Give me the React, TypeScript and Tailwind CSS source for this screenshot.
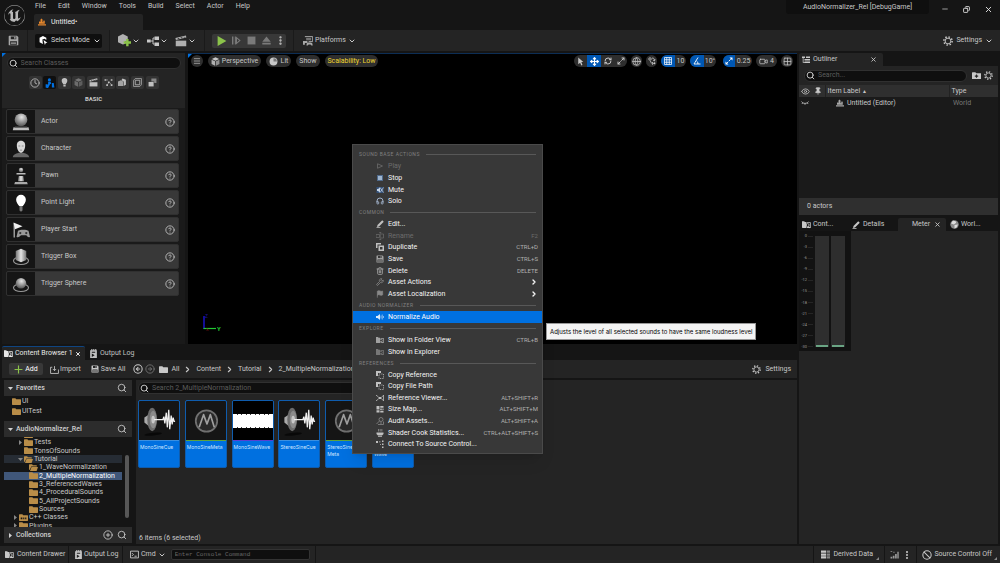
import React from "react";
import {
  ChevronDown, ChevronRight, CircleHelp, Clock, EllipsisVertical, Eye, Flag, Globe, Headphones,
  Grid2x2, Menu, Minus, Move, Pin, CirclePlus, RefreshCw, Search, Wrench, X,
  Copy, CircleArrowLeft, CircleArrowRight, Ban, Trash2, Video, Maximize2,
} from "lucide-react";
import { SiUnrealengine } from "react-icons/si";

type SvgProps = { className?: string; children?: React.ReactNode; box?: string };

function Svg({ className = "size-[9px]", children, box = "0 0 16 16" }: SvgProps) {
  return (
    <svg viewBox={box} className={`shrink-0 ${className}`} fill="currentColor" aria-hidden="true">
      {children}
    </svg>
  );
}

const GearIcon = ({ className = "size-[10px]" }: SvgProps) => (
  <Svg className={className}>
    <circle cx="8" cy="8" r="4.600" fill="none" stroke="currentColor" strokeWidth="1.500" />
    <circle cx="8" cy="8" r="6.600" fill="none" stroke="currentColor" strokeWidth="2.400" strokeDasharray="2.300 2.880" />
  </Svg>
);

const SaveIcon = ({ className = "size-[9px]" }: SvgProps) => (
  <Svg className={className}>
    <path fillRule="evenodd" d="M1 2a1 1 0 0 1 1-1h11l2 2v11a1 1 0 0 1-1 1H2a1 1 0 0 1-1-1zM4 2v4h8V2zM3 9v5h10V9z" />
    <path d="M9 2.500h2v3H9zM4 10h8v1H4zM4 12h8v1H4z" />
  </Svg>
);

const LevelIcon = ({ className = "size-[9px]" }: SvgProps) => (
  <Svg className={className}>
    <path d="M0 12.500h16V15H0z" />
    <path d="M2 11.500V8l1.500-1.500L5 8V3l2-2 2 2v5l1.500 1V6l1.500-1.500L13.500 6v5.500z" />
  </Svg>
);

const BrowserIcon = ({ className = "size-[9px]" }: SvgProps) => (
  <Svg className={className}>
    <path d="M0 2h4l1 1.500h3V14H1a1 1 0 0 1-1-1z" />
    <path d="M9 4h6.500v10H9v-1.500h5v-7H9z" />
    <circle cx="10" cy="9" r="2.600" fill="none" stroke="currentColor" strokeWidth="1.400" />
    <path d="M11.500 10.500l3 3-1 1-3-3z" />
  </Svg>
);

const LogIcon = ({ className = "size-[9px]" }: SvgProps) => (
  <Svg className={className}>
    <path fillRule="evenodd" d="M2 2h2V0h2v2h1.500V0h2v2H11V0h2v2h1v14H2zM5 5v1.500h6V5zM5 8v6l5-3z" />
  </Svg>
);

const FolderIcon = ({ className = "size-[9px]" }: SvgProps) => (
  <Svg className={className}>
    <path d="M0 3a1 1 0 0 1 1-1h5l1.500 2H15a1 1 0 0 1 1 1v8a1 1 0 0 1-1 1H1a1 1 0 0 1-1-1z" />
  </Svg>
);

const FolderOpenIcon = ({ className = "size-[9px]" }: SvgProps) => (
  <Svg className={className}>
    <path d="M0 3a1 1 0 0 1 1-1h4.500L7 4h6a1 1 0 0 1 1 1v1H4L1.500 12H0z" />
    <path d="M4.500 7H16l-2.500 7H1.800z" />
  </Svg>
);

const CodeFolderIcon = ({ className = "size-[9px]" }: SvgProps) => (
  <Svg className={className}>
    <path fillRule="evenodd" d="M0 3a1 1 0 0 1 1-1h5l1.500 2H15a1 1 0 0 1 1 1v8a1 1 0 0 1-1 1H1a1 1 0 0 1-1-1zM3 8v3h3V8zM7.500 8v3h2V8zM11 8v3h2V8z" />
  </Svg>
);

const CubeIcon = ({ className = "size-[9px]" }: SvgProps) => (
  <Svg className={className}>
    <path d="M8 0.500l6.500 3L8 6.500l-6.500-3z" />
    <path d="M1 4.700l6.300 3v7.800L1 12.300z" opacity=".85" />
    <path d="M15 4.700l-6.300 3v7.800L15 12.300z" opacity=".65" />
  </Svg>
);

const NodesIcon = ({ className = "size-[9px]" }: SvgProps) => (
  <Svg className={className}>
    <path d="M0 6h5v4H0zM10 2h6v4.500h-6zM10 10h6v4.500h-6z" />
    <path d="M5 8h3M10 4H8v8h2" fill="none" stroke="currentColor" strokeWidth="1.300" />
  </Svg>
);

const DotsIcon = ({ className = "size-[9px]" }: SvgProps) => (
  <Svg className={className}>
    <path d="M1 2h3v3H1zM12 2h3v3h-3zM12 11h3v3h-3zM4 11h3v3H4zM7 6h3v3H7z" />
    <path d="M4 3.500h3M10 8l3 4M8 9l-2 3" stroke="currentColor" strokeWidth="1" />
  </Svg>
);

const SurfaceIcon = ({ className = "size-[9px]" }: SvgProps) => (
  <Svg className={className}>
    <circle cx="4" cy="4" r="2.500" fill="none" stroke="currentColor" strokeWidth="1.600" />
    <path d="M8 2c4 0 5 2 5 5M14 4l-1 4-3-2M5 8c0 3 2 5 5 5M8 10l3 3-3 2.500" fill="none" stroke="currentColor" strokeWidth="1.600" />
    <circle cx="13" cy="12.500" r="1.800" />
  </Svg>
);

const ClapperIcon = ({ className = "size-[9px]" }: SvgProps) => (
  <Svg className={className}>
    <path d="M1 7.500h14V15H1z" />
    <path fillRule="evenodd" d="M0.500 4L14.500 0.500l.7 2.800L1.200 6.700zM3 4.500l2 .8 1.500-.4-2-.8zM7 3.500l2 .8 1.500-.4-2-.8zM11 2.500l2 .8 1-.3-2-.8z" />
  </Svg>
);

const PencilIcon = ({ className = "size-[8px]" }: SvgProps) => (
  <Svg className={className}>
    <path d="M3 10L12.500 0.500l3 3L6 13l-4 1zM1 14.500h8V16H1z" />
  </Svg>
);

const StackIcon = ({ className = "size-[8px]" }: SvgProps) => (
  <Svg className={className}>
    <path d="M0 0h10v3H3v7H0z" />
    <path fillRule="evenodd" d="M5 5h11v11H5zM8 8v5h5V8z" />
  </Svg>
);

const CopyRefIcon = ({ className = "size-[8px]" }: SvgProps) => (
  <Svg className={className}>
    <path d="M0 0h10v4H4v6H0z" />
    <path d="M6 6h9v9H6z" fill="none" stroke="currentColor" strokeWidth="1.500" strokeDasharray="2.500 2" />
  </Svg>
);

const PlayIcon = ({ className = "size-[8px]" }: SvgProps) => (
  <Svg className={className}>
    <path d="M3 3.500L13 8 3 12.500z" fill="none" stroke="currentColor" strokeWidth="1.600" />
  </Svg>
);

const StopIcon = ({ className = "size-[8px]" }: SvgProps) => (
  <Svg className={className}>
    <path d="M2 2h12v12H2z" fill="#4f6a8c" />
    <path d="M4 4h8v8H4z" fill="#9fb6cf" />
  </Svg>
);

const MuteIcon = ({ className = "size-[8px]" }: SvgProps) => (
  <Svg className={className}>
    <path d="M1 2h14v12H1z" fill="#35527a" />
    <path d="M2 6h2l4-3v10l-4-3H2z" fill="#c5d4e6" />
    <path d="M8 3l7 10M15 3L8 13" stroke="#c5d4e6" strokeWidth="1.500" />
  </Svg>
);

const SpeakerIcon = ({ className = "size-[8px]" }: SvgProps) => (
  <Svg className={className}>
    <path d="M0 6h3l5-4v12l-5-4H0z" opacity=".85" />
    <path d="M10 5v6M12.500 3v10M15 6v4" stroke="currentColor" strokeWidth="1.400" opacity=".7" />
  </Svg>
);

const RenameIcon = ({ className = "size-[8px]" }: SvgProps) => (
  <Svg className={className}>
    <path d="M0 5h7v6H0zM10 4h5v8h-5M8.500 1v14M6.500 1h4M6.500 15h4" fill="none" stroke="currentColor" strokeWidth="1.400" />
  </Svg>
);

const RefViewIcon = ({ className = "size-[8px]" }: SvgProps) => (
  <Svg className={className}>
    <path d="M5.500 6h5v4h-5z" />
    <path d="M0 3h2l3 4M0 13h2l3-4M16 3h-2l-3 4M16 13h-2l-3-4M15 3v10" fill="none" stroke="currentColor" strokeWidth="1.500" />
  </Svg>
);

const SizeMapIcon = ({ className = "size-[8px]" }: SvgProps) => (
  <Svg className={className}>
    <path d="M1 2h6v7H1zM1 10.500h6V15H1zM8.500 2H15v3.500H8.500zM8.500 7h3v3h-3zM13 7h2v3h-2zM8.500 11.500H15V15H8.500z" />
  </Svg>
);

const AuditIcon = ({ className = "size-[8px]" }: SvgProps) => (
  <Svg className={className}>
    <circle cx="10" cy="5" r="4" fill="none" stroke="currentColor" strokeWidth="1.600" />
    <path d="M7 8L1 14M4 15h11V9M10 10v4" fill="none" stroke="currentColor" strokeWidth="1.600" />
  </Svg>
);

const CookIcon = ({ className = "size-[8px]" }: SvgProps) => (
  <Svg className={className}>
    <path d="M4 0h1.500v5H4zM7.500 0H9v5H7.500zM11 0h1.500v5H11z" opacity=".7" />
    <path d="M1 7h14v3l-3 3H4l-3-3zM4 14h8v1.500H4z" />
  </Svg>
);

const BranchIcon = ({ className = "size-[8px]" }: SvgProps) => (
  <Svg className={className}>
    <path d="M0 2h4v4H0zM12 1h3v3h-3zM12 7h3v3h-3zM12 13h3v3h-3zM6 3h3v1.500H6zM8 8h2v1.500H8z" />
  </Svg>
);

const PlatformsIcon = ({ className = "size-[10px]" }: SvgProps) => (
  <Svg className={className}>
    <path d="M3 1h12.500v8H9" fill="none" stroke="currentColor" strokeWidth="1.600" />
    <path d="M0 8h7v3H3v3H0zM6 12c0-2 8-2 9 0l.5 3h-2L12 13.500H9L7.500 15H5.500z" />
    <path d="M5 3h8v4H5z" opacity=".6" />
  </Svg>
);

const OutlinerIcon = ({ className = "size-[8px]" }: SvgProps) => (
  <Svg className={className}>
    <path d="M0 1h6v3H0zM5 6h11v3H5zM5 11h11v3H5zM8 1h8v3H8zM1.500 4H3v8h2v1.500H1.500z" />
  </Svg>
);

const DerivedIcon = ({ className = "size-[9px]" }: SvgProps) => (
  <Svg className={className}>
    <path d="M0 1h9v4H0zM0 6h9v4H0zM0 11h9v4H0z" />
    <path d="M10 1h6v4h-6zM10 6h6v4h-6zM10 11h6v4h-6z" opacity=".6" />
  </Svg>
);

const Triangle = ({ open = false }: { open?: boolean }) => (
  <Svg className="size-[5px]" box="0 0 10 10">
    {open ? <path d="M0 2h10L5 8z" /> : <path d="M2 0l6 5-6 5z" />}
  </Svg>
);

function Thumb({ kind }: { kind: string }) {
  return (
    <svg viewBox="0 0 24 24" className="size-[18px]" aria-hidden="true">
      <defs>
        <radialGradient id={`ball-${kind}`} cx=".55" cy=".3" r=".7">
          <stop offset="0" stopColor="#e6e6e6" />
          <stop offset="1" stopColor="#555" />
        </radialGradient>
        <linearGradient id={`side-${kind}`}>
          <stop offset="0" stopColor="#777" />
          <stop offset=".5" stopColor="#e4e4e4" />
          <stop offset="1" stopColor="#777" />
        </linearGradient>
      </defs>
      {kind === "actor" && (
        <>
          <circle cx="12" cy="9" r="8.500" fill={`url(#ball-${kind})`} />
          <path d="M2 19h20l1 4H1z" fill="#bbb" />
          <path d="M4 18h16l1 1.500H3z" fill="#555" />
        </>
      )}
      {kind === "character" && (
        <>
          <path d="M1 23c1-5 6-5 8-6h6c2 1 7 1 8 6z" fill="#666" />
          <path d="M12 1c4 0 6 3 5.500 7.500C17 13 14.500 17 12 17s-5-4-5.500-8.500C6 4 8 1 12 1z" fill="#d8d8d8" />
          <path d="M8.500 8h2.500M13 8h2.500M10.500 13.500h3" stroke="#777" strokeWidth="1" />
        </>
      )}
      {kind === "pawn" && (
        <>
          <circle cx="12" cy="4" r="3" fill={`url(#ball-${kind})`} />
          <path d="M6 8h12v2H6z" fill="#bbb" />
          <path d="M9 12h6l1 7H8z" fill={`url(#side-${kind})`} />
          <path d="M4 20h16l1 3H3z" fill="#aaa" />
        </>
      )}
      {kind === "light" && (
        <>
          <path d="M12 1a6.500 6.500 0 0 1 6.500 6.500c0 3.500-2.500 6-4 8.500h-5c-1.500-2.500-4-5-4-8.500A6.500 6.500 0 0 1 12 1z" fill="#fff" />
          <path d="M10 16h4v6l-2 1.500-2-1.500z" fill="#777" />
        </>
      )}
      {kind === "start" && (
        <>
          <path d="M2 3h2v19H2z" fill="#999" />
          <path d="M2 2l12 5-10 4z" fill="#f0f0f0" />
          <path d="M8 13c2-2 12-2 14 0l2 8c-2 2-4-1-5-2h-7c-1 1-4 4-6 2z" fill="#999" />
          <circle cx="11" cy="16" r="1.500" fill="#333" />
          <circle cx="19" cy="16" r="1.500" fill="#333" />
        </>
      )}
      {kind === "box" && (
        <>
          <ellipse cx="12" cy="17" rx="10" ry="5" fill="none" stroke="#999" strokeWidth="1.500" />
          <path d="M5 4l7-3 7 3v12l-7 3-7-3z" fill={`url(#side-${kind})`} />
        </>
      )}
      {kind === "sphere" && (
        <>
          <ellipse cx="12" cy="17" rx="10" ry="5" fill="none" stroke="#999" strokeWidth="1.500" />
          <circle cx="12" cy="11" r="7" fill={`url(#ball-${kind})`} />
        </>
      )}
    </svg>
  );
}

const placeables = [
  ["Actor", "actor"], ["Character", "character"], ["Pawn", "pawn"], ["Point Light", "light"],
  ["Player Start", "start"], ["Trigger Box", "box"], ["Trigger Sphere", "sphere"],
];

function TitleBar() {
  return (
    <header className="flex h-[30px] shrink-0">
      <div className="flex w-[34px] items-center pl-1">
        <SiUnrealengine className="size-[21px] text-[#b8b8b8]" aria-label="Unreal" />
      </div>
      <div className="flex flex-col">
        <nav className="flex h-[13px] items-center gap-3 pl-px">
          {["File", "Edit", "Window", "Tools", "Build", "Select", "Actor", "Help"].map((m) => (
            <button key={m}>{m}</button>
          ))}
        </nav>
        <div className="mt-px flex h-4 w-[109px] items-center gap-[5px] rounded-t-[2px] bg-[#242424] pl-1 text-[#f0f0f0]">
          <LevelIcon className="size-[8px] text-[#e8882c]" />
          Untitled•
        </div>
      </div>
      <div className="ml-auto flex items-start">
        <div className="flex h-[14px] w-[143px] items-center justify-center rounded-b-[3px] bg-[#0f0f0f]">
          AudioNormalizer_Rel [DebugGame]
        </div>
        <div className="flex h-[18px] items-center gap-[14px] pr-[7px] pl-3 text-[#e0e0e0]">
          <button aria-label="Minimize"><Minus className="size-2" strokeWidth={2} /></button>
          <button aria-label="Restore"><Copy className="size-[7px] -scale-x-100" strokeWidth={3} /></button>
          <button aria-label="Close"><X className="size-[9px]" strokeWidth={2.5} /></button>
        </div>
      </div>
    </header>
  );
}

const Down = () => <ChevronDown className="size-[8px] shrink-0" strokeWidth={3} />;
const Rule = () => <div className="h-full w-px bg-[#1a1a1a]" />;

function Toolbar() {
  return (
    <div className="flex h-[21px] shrink-0 items-center bg-[#242424]">
      <button aria-label="Save" className="flex w-[27px] justify-center"><SaveIcon className="size-[11px] text-[#a8a8a8]" /></button>
      <Rule />
      <button className="mx-[7px] flex h-[14px] w-[67px] items-center gap-[3px] rounded-[2px] bg-[#0f0f0f] pl-1 text-[#d4d4d4]">
        <Svg className="size-[9px] text-white">
          <path d="M7 0l6 3v4l-3-2-4 1 1 8-6-3V3z" />
          <path d="M8 7l7 5-3 .5L10.500 16z" />
        </Svg>
        Select Mode <Down />
      </button>
      <Rule />
      <div className="flex w-[94px] items-center gap-[7px] pl-2">
        <button aria-label="Add to level" className="flex items-center gap-px">
          <Svg className="size-[13px] text-[#b0b0b0]">
            <path d="M6 0l6 3v6H9v3l-3 1-6-3V3z" />
            <path d="M10 9H7v3h3v3h3v-3h3V9h-3V6h-3z" fill="#8bc34a" />
          </Svg>
          <Down />
        </button>
        <button aria-label="Blueprints" className="flex items-center gap-px"><NodesIcon className="size-[12px]" /><Down /></button>
        <button aria-label="Cinematics" className="flex items-center gap-px"><ClapperIcon className="size-[12px] text-[#b0b0b0]" /><Down /></button>
      </div>
      <Rule />
      <div className="mx-[7px] flex h-[14px] w-[74px] items-center rounded-[2px] bg-[#383838] pl-[5px] text-[#7a7a7a]">
        <button aria-label="Play" className="w-[15px] text-[#8bc34a]"><Svg className="size-[10px]"><path d="M1 0l14 8-14 8z" /></Svg></button>
        <button aria-label="Step" className="w-[15px]"><Svg><path d="M0 1h2.500v14H0zM5 1h2v14H5z" /><path d="M8 3l6 5-6 5z" fill="none" stroke="currentColor" strokeWidth="1.800" /></Svg></button>
        <button aria-label="Stop" className="w-[15px]"><Svg><path d="M1 1h14v14H1z" /></Svg></button>
        <button aria-label="Eject" className="w-[13px]"><Svg><path d="M8 1l7.500 9H.5zM.5 12h15v3H.5z" /></Svg></button>
        <button aria-label="Play options" className="text-[#c8c8c8]"><EllipsisVertical className="size-[11px]" strokeWidth={3} /></button>
      </div>
      <Rule />
      <button className="flex items-center gap-[2px] pl-[9px]"><PlatformsIcon className="size-[10px] text-[#a8a8a8]" />Platforms <Down /></button>
      <button className="mr-[7px] ml-auto flex items-center gap-[3px]"><GearIcon className="size-[10px]" />Settings <Down /></button>
    </div>
  );
}

function SearchBox({ label, className = "" }: { label: string; className?: string }) {
  return (
    <label className={`flex h-[12px] items-center gap-[3px] rounded-full border border-[#303030] bg-[#0f0f0f] px-px ${className}`}>
      <Search className="size-[9px] shrink-0 text-[#d0d0d0]" strokeWidth={2.5} />
      <input type="text" aria-label={label} placeholder={label} className="w-full min-w-0 bg-transparent outline-none placeholder:text-[#5c5c5c]" />
    </label>
  );
}

function Corner() {
  return <Svg className="absolute top-0 left-0 size-1 text-[#0070e0]" box="0 0 4 4"><path d="M0 0h4L0 4z" /></Svg>;
}

function PlaceActors() {
  const cats = [
    ["Recent", <Clock className="size-[10px]" />],
    ["Basic", <Svg className="size-[10px]"><circle cx="7" cy="3" r="2.500" /><path d="M5 6h4l1 3-2 1-1 2-2 4H2l3-7zM1 10h3v5H1zM11 8h3l1 7h-4z" /></Svg>],
    ["Lights", <Svg><path d="M8 0a5 5 0 0 1 5 5c0 3-2 4-2.500 6h-5C5 9 3 8 3 5a5 5 0 0 1 5-5zM6 12h4v3H6z" /></Svg>],
    ["Shapes", <CubeIcon className="size-[9px] text-[#777]" />],
    ["Cinematic", <ClapperIcon />],
    ["Visual Effects", <DotsIcon />],
    ["Geometry", <Svg><path d="M0 6l5-2 4 2v8H0z" opacity=".8" /><path d="M8 1l6 2v9l-4 2V6L6 4z" /></Svg>],
    ["Volumes", <Svg><path d="M4 1h11v11l-3 3H1V4z" fill="none" stroke="currentColor" strokeWidth="1.200" /><path d="M4 4h8v8H4z" fill="none" stroke="currentColor" strokeWidth="1.400" /></Svg>],
    ["All Classes", <Svg><path d="M6 1h9v8h-4V6H6z" opacity=".6" /><path d="M1 7h9v8H1z" /></Svg>],
  ] as [string, React.ReactNode][];
  return (
    <section className="relative flex w-[183px] shrink-0 flex-col bg-[#1a1a1a]">
      <Corner />
      <div className="flex h-[55px] flex-col items-center bg-[#242424] pt-1">
        <SearchBox label="Search Classes" className="w-[174px]" />
        <div className="mt-[7px] flex w-[130px] justify-between">
          {cats.map(([name, icon], i) => (
            <button key={name} aria-label={name}
              className={i === 1
                ? "flex size-[13px] items-center justify-center rounded-[2px] bg-[#0f0f0f] text-[#0070e0]"
                : "flex size-[13px] items-center justify-center rounded-[2px] bg-[#333] text-[#c0c0c0]"}>
              {icon}
            </button>
          ))}
        </div>
        <h2 className="mt-[5px] text-[6px] font-bold">BASIC</h2>
      </div>
      <ul className="flex flex-col gap-[2px] pt-px pr-[6px] pl-1">
        {placeables.map(([name, kind]) => (
          <li key={kind} className="flex h-[25px] items-center overflow-hidden rounded-[2px] border border-[#303030] bg-[#383838]">
            <span className="flex h-full w-[28px] items-center justify-center bg-[#151515]"><Thumb kind={kind} /></span>
            <span className="flex-1 pl-[6px]">{name}</span>
            <button aria-label={`About ${name}`} className="pr-[3px]"><CircleHelp className="size-[10px]" /></button>
          </li>
        ))}
      </ul>
    </section>
  );
}

function Viewport() {
  const pill = "flex h-3 items-center justify-center rounded-full bg-[#2e2e2e]";
  const seg = "flex h-full w-[13px] items-center justify-center";
  const blue = "flex h-full w-[14px] items-center justify-center bg-[#0057b3] text-white";
  return (
    <section className="relative min-w-0 flex-1 border-t border-[#0d2e55] bg-black">
      <Corner />
      <div className="flex pt-px pr-1 pl-[3px]">
        <div className="flex gap-[5px]">
          <button aria-label="Viewport options" className={`${pill} w-3`}><Menu className="size-[8px]" /></button>
          <button className={`${pill} w-[53px] gap-[2px]`}><CubeIcon />Perspective</button>
          <button className={`${pill} w-[25px] gap-[3px]`}><Svg><circle cx="8" cy="8" r="7" /><path d="M8 8V2a6 6 0 0 1 6 6z" fill="#777" /></Svg>Lit</button>
          <button className={`${pill} w-[24px]`}>Show</button>
          <button className={`${pill} w-[53px] text-[#f0d631]`}>Scalability: Low</button>
        </div>
        <div className="ml-auto flex gap-1">
          <div className={`${pill} overflow-hidden`}>
            <button aria-label="Select" className={seg}><Svg className="size-[9px]"><path d="M4 1l9 8H9.500l2 5-2 1-2.200-5L4 13z" /></Svg></button>
            <button aria-label="Move" className={blue}><Move className="size-[9px]" strokeWidth={3} /></button>
            <button aria-label="Rotate" className={seg}><RefreshCw className="size-[8px]" strokeWidth={3} /></button>
            <button aria-label="Scale" className={seg}><Maximize2 className="size-[8px]" strokeWidth={3} /></button>
          </div>
          <button aria-label="World space" className={`${pill} w-[11px]`}><Globe className="size-[9px]" /></button>
          <button aria-label="Surface snapping" className={`${pill} w-[11px]`}><SurfaceIcon className="size-[8px]" /></button>
          <div className={`${pill} overflow-hidden`}>
            <button aria-label="Grid snap" className={blue}><Svg className="size-[8px]"><path d="M1 1h14v14H1zM1 5.500h14M1 10.500h14M5.500 1v14M10.500 1v14" fill="none" stroke="currentColor" strokeWidth="1.500" /></Svg></button>
            <button className="w-[11px]">10</button>
          </div>
          <div className={`${pill} mr-[3px] overflow-hidden`}>
            <button aria-label="Angle snap" className={blue}><Svg className="size-[8px]"><path d="M10 1L2 14h13M10 14a6 6 0 0 0-3-6" fill="none" stroke="currentColor" strokeWidth="1.800" /></Svg></button>
            <button className="w-[12px]">10°</button>
          </div>
          <div className={`${pill} overflow-hidden`}>
            <button aria-label="Scale snap" className="flex h-full w-[12px] items-center justify-center bg-[#0057b3] text-white"><Svg className="size-[8px]"><path d="M9 1h6v6zM7 15H1V9z" /><path d="M3 13L13 3" stroke="currentColor" strokeWidth="1.800" strokeDasharray="5 2" /></Svg></button>
            <button className="w-[17px]">0.25</button>
          </div>
          <button className={`${pill} w-[21px] gap-[2px]`}><Video className="size-[9px]" />4</button>
          <button aria-label="Layout" className={`${pill} w-3`}><Grid2x2 className="size-[9px]" /></button>
        </div>
      </div>
      <svg viewBox="0 0 24 20" className="absolute bottom-3 left-[13px] h-5 w-6" aria-hidden="true">
        <path d="M3 4v13" stroke="#1a12c8" strokeWidth="1.500" />
        <path d="M2.500 16.500H15" stroke="#22c832" strokeWidth="1.200" />
        <text x="4" y="6" fontSize="5" fill="#1a1290" fontFamily="Roboto">Z</text>
        <text x="16" y="19" fontSize="6" fill="#22c832" fontFamily="Roboto" fontWeight="700">Y</text>
        <text x="5" y="19" fontSize="4" fill="#8c1414" fontFamily="Roboto">X</text>
      </svg>
    </section>
  );
}

const tree = [
  { name: "", pad: "pl-[14px]", icon: "folder" },
  { name: "Tests", pad: "pl-[14px]", icon: "folder", arrow: "closed" },
  { name: "TonsOfSounds", pad: "pl-[14px]", icon: "folder" },
  { name: "Tutorial", pad: "pl-[14px]", icon: "open", arrow: "open", bg: "bg-[#262c34]" },
  { name: "1_WaveNormalization", pad: "pl-[19px]", icon: "open" },
  { name: "2_MultipleNormalization", pad: "pl-[19px]", icon: "folder", bg: "bg-[#40577a] text-white" },
  { name: "3_ReferencedWaves", pad: "pl-[19px]", icon: "folder" },
  { name: "4_ProceduralSounds", pad: "pl-[19px]", icon: "folder" },
  { name: "5_AllProjectSounds", pad: "pl-[19px]", icon: "folder" },
  { name: "Sources", pad: "pl-[19px]", icon: "folder" },
  { name: "C++ Classes", pad: "pl-[9px]", icon: "code", arrow: "closed" },
  { name: "Plugins", pad: "pl-[9px]", icon: "folder", arrow: "closed" },
];

function TreeIcon({ kind }: { kind: string }) {
  const c = "size-[9px] text-[#b98d48]";
  if (kind === "open") return <FolderOpenIcon className={c} />;
  if (kind === "code") return <CodeFolderIcon className={c} />;
  return <FolderIcon className={c} />;
}

function SectionHead({ title, open, children }: { title: string; open: boolean; children?: React.ReactNode }) {
  return (
    <div className="flex h-4 shrink-0 items-center gap-[3px] bg-[#2c2c2c] pr-[5px] pl-1 text-[#d0d0d0]">
      <Triangle open={open} />
      <h3 className="flex-1 font-medium">{title}</h3>
      {children}
      <button aria-label={`Search ${title}`}><Search className="size-[10px]" /></button>
    </div>
  );
}

function Sources() {
  return (
    <aside className="flex w-[128px] shrink-0 flex-col bg-[#151515] pb-px">
      <SectionHead title="Favorites" open />
      <ul className="h-[25px] pl-2">
        {["UI", "UITest"].map((n) => (
          <li key={n} className="flex h-[10px] items-center gap-px"><TreeIcon kind="folder" />{n}</li>
        ))}
      </ul>
      <SectionHead title="AudioNormalizer_Rel" open />
      <div className="relative min-h-0 flex-1 overflow-hidden">
        <ul className="-mt-[7px] grid h-[100px] w-[118px] auto-rows-fr">
          {tree.map((t, i) => (
            <li key={i} className={`flex min-h-0 items-center leading-[8px] ${t.pad} ${t.bg ?? ""}`}>
              <span className="w-[6px] text-[#888]">{t.arrow && <Triangle open={t.arrow === "open"} />}</span>
              <TreeIcon kind={t.icon} /><span className="pl-px">{t.name}</span>
            </li>
          ))}
        </ul>
        <div className="absolute top-[18px] right-[3px] h-[63px] w-1 rounded-full bg-[#575757]" />
      </div>
      <SectionHead title="Collections" open={false}>
        <button aria-label="Add collection" className="pr-px"><CirclePlus className="size-[10px]" /></button>
      </SectionHead>
    </aside>
  );
}

function AssetArt({ kind }: { kind: string }) {
  if (kind === "wave")
    return (
      <svg viewBox="0 0 40 40" className="size-full bg-black" preserveAspectRatio="none" aria-hidden="true">
        <path d="M0 14h40v13H0z" fill="#fff" />
        <path d="M0 14h40M0 27h40" stroke="#fff" strokeWidth="1.200" strokeDasharray="4 1 3 1" />
      </svg>
    );
  if (kind === "meta")
    return (
      <svg viewBox="0 0 40 40" className="size-full" aria-hidden="true">
        <circle cx="20.500" cy="20.500" r="11" fill="#282828" stroke="#707070" strokeWidth="1.800" />
        <path d="M13 27l4.500-13 3.500 9.500 3.500-9.500 4 13" fill="none" stroke="#a0a0a0" strokeWidth="1.700" strokeLinejoin="round" />
      </svg>
    );
  return (
    <svg viewBox="0 0 40 40" className="size-full" aria-hidden="true">
      <ellipse cx="14" cy="34" rx="9" ry="1.500" fill="#080808" transform="rotate(-6 14 34)" />
      <path d="M5 17l6-4v14l-6-5z" fill="#aaa" />
      <ellipse cx="13" cy="19" rx="5" ry="12" fill="#6c6c6c" />
      <ellipse cx="14" cy="19" rx="3.500" ry="9" fill="#8c8c8c" />
      <ellipse cx="14" cy="19" rx="1.800" ry="4" fill="#c8c8c8" />
      <path d="M15 19h9l1-3 1 7 1.500-11 1 15 1.500-18 1 20 1.500-14 1 9 1-7 1 4h1" fill="none" stroke="#f0f0f0" strokeWidth="1.300" />
    </svg>
  );
}

const assets = [
  { name: "MonoSineCue", kind: "cue", line: "bg-[#3a8fe0]" },
  { name: "MonoSineMeta", kind: "meta", line: "bg-[#5da43c]" },
  { name: "MonoSineWave", kind: "wave", line: "bg-[#5a3fd0]" },
  { name: "StereoSineCue", kind: "cue", line: "bg-[#3a8fe0]" },
  { name: "StereoSine Meta", kind: "meta", line: "bg-[#5da43c]" },
  { name: "StereoSine Wave", kind: "wave", line: "bg-[#5a3fd0]" },
];

function ContentBrowser() {
  return (
    <section className="flex h-[200px] shrink-0 flex-col">
      <div className="mt-[2px] flex h-[14px] text-[#c0c0c0]">
        <div className="flex w-[83px] items-center gap-[2px] rounded-t-[2px] border-t border-[#0f4582] bg-[#242424] pl-[2px] text-[#e8e8e8]">
          <BrowserIcon />Content Browser 1
          <button aria-label="Close tab"><X className="size-[6px]" strokeWidth={4} /></button>
        </div>
        <button className="flex items-center gap-[2px] pl-1"><LogIcon />Output Log</button>
      </div>
      <div className="flex h-[18px] items-center bg-[#242424] pl-[7px]">
        <button className="flex h-3 w-[34px] items-center justify-center gap-[2px] rounded-[2px] bg-[#383838] text-white">
          <Svg className="size-[9px] text-[#8bc34a]"><path d="M7 1h2v6h6v2H9v6H7V9H1V7h6z" /></Svg>Add
        </button>
        <button className="flex items-center gap-px pl-[7px]"><Svg><path d="M4 4H1v11h14V8M8 2v8M5 7l3 3 3-3" fill="none" stroke="currentColor" strokeWidth="1.500" /></Svg>Import</button>
        <button className="flex items-center gap-[2px] pl-[10px]"><SaveIcon className="size-[8px]" />Save All</button>
        <button aria-label="Back" className="pl-[7px]"><CircleArrowLeft className="size-[10px]" strokeWidth={2.5} /></button>
        <button aria-label="Forward" className="pl-[2px] text-[#777]"><CircleArrowRight className="size-[10px]" /></button>
        <nav className="flex items-center gap-[4px] pl-[4px]">
          <FolderIcon />
          {["All", "Content", "Tutorial", "2_MultipleNormalization"].map((c, i) => (
            <React.Fragment key={c}>
              {i > 0 && <ChevronRight className="size-[9px]" strokeWidth={3} />}
              <a href="#">{c}</a>
            </React.Fragment>
          ))}
        </nav>
        <button className="ml-auto flex items-center gap-1 pr-[6px]"><GearIcon className="size-[9px]" />Settings</button>
      </div>
      <div className="mt-[2px] flex min-h-0 flex-1 gap-1 pl-[2px]">
        <Sources />
        <div className="flex min-w-0 flex-1 flex-col bg-[#242424] px-[2px]">
          <SearchBox label="Search 2_MultipleNormalization" className="mt-[2px] w-[380px]" />
          <ul className="mt-[6px] flex w-[276px] justify-between">
            {assets.map((a) => (
              <li key={a.name} className="flex h-[68px] w-[42px] flex-col overflow-hidden rounded-[2px] border border-[#0f5cad] bg-[#0070e0]">
                <div className="h-[39px] bg-[#151515]"><AssetArt kind={a.kind} /></div>
                <div className={`h-px ${a.line}`} />
                <p className="pt-[3px] pl-px font-['Inter',sans-serif] text-[5px] leading-[7px] text-[#cfe6ff]">{a.name}</p>
              </li>
            ))}
          </ul>
          <p className="mt-auto pb-px pl-px">6 items (6 selected)</p>
        </div>
      </div>
    </section>
  );
}

function RightColumn() {
  const ticks = ["0", "-3", "-6", "-9", "-12", "-15", "-18", "-21", "-24", "-27", "-30"];
  return (
    <aside className="flex w-[199px] shrink-0 flex-col">
      <div className="flex h-[13px] w-[84px] items-center gap-[3px] rounded-t-[2px] bg-[#242424] pr-[6px] pl-[3px]">
        <OutlinerIcon /><span className="flex-1">Outliner</span>
        <button aria-label="Close tab"><X className="size-[7px]" strokeWidth={3} /></button>
      </div>
      <div className="flex h-[19px] items-center gap-[3px] bg-[#242424] pr-[5px] pl-[5px]">
        <SearchBox label="Search..." className="flex-1" />
        <button aria-label="New folder" className="pl-[2px]"><Svg><path fillRule="evenodd" d="M0 3a1 1 0 0 1 1-1h5l1.500 2H16v10H0zM7 6v2H5v2h2v2h2v-2h2V8H9V6z" /></Svg></button>
        <button aria-label="Outliner settings"><GearIcon className="size-[9px]" /></button>
      </div>
      <div className="h-[113px] flex-auto grow-0 bg-[#1a1a1a]">
        <table className="w-full table-fixed border-collapse text-left">
          <thead className="bg-[#2f2f2f]">
            <tr className="h-3">
              <th className="w-[13px] pl-[2px]"><Eye className="size-[9px]" aria-label="Visible" /></th>
              <th className="w-[13px] border-r border-[#222] pl-[2px]"><Pin className="size-[8px] fill-current" aria-label="Pinned" /></th>
              <th className="border-r border-[#222] pl-[2px] font-normal">Item Label <span className="text-[5px]">▲</span></th>
              <th className="w-[49px] pl-[2px] font-normal">Type</th>
            </tr>
          </thead>
          <tbody>
            <tr className="h-3">
              <td className="pl-[2px]"><Svg className="size-[8px]"><path d="M1 5c3 5 11 5 14 0M3 8l-1 2M8 9v2.500M13 8l1 2" fill="none" stroke="currentColor" strokeWidth="1.600" /></Svg></td>
              <td />
              <td className="pl-[11px]"><span className="flex items-center gap-[3px]"><LevelIcon className="size-[8px] text-[#a8a8a8]" />Untitled (Editor)</span></td>
              <td className="pl-1 text-[#777]">World</td>
            </tr>
          </tbody>
        </table>
      </div>
      <div className="flex h-[17px] items-center bg-[#2f2f2f] pl-[8px]">0 actors</div>
      <div className="mt-[3px] flex h-[13px]">
        <button className="flex w-[49px] items-center gap-[2px] pl-[3px]"><BrowserIcon />Cont...</button>
        <button className="flex w-[50px] items-center gap-[3px] pl-1"><PencilIcon />Details</button>
        <div className="flex w-[48px] items-center gap-[4px] rounded-t-[2px] bg-[#242424] pl-[14px]">
          Meter<button aria-label="Close tab"><X className="size-[7px]" strokeWidth={3} /></button>
        </div>
        <button className="flex items-center gap-[2px] pl-1"><Svg><circle cx="8" cy="8" r="7.500" fill="#8a8a8a" /><path d="M5 1l5 1 1 3-4 3-5-2zM8 9l6-1-2 5-4 2z" fill="#ddd" /></Svg>Worl...</button>
      </div>
      <div className="flex-1 bg-[#242424]">
        <div className="flex h-[120px] w-[52px] gap-[2px] bg-[#121212] pt-[5px] pb-1">
          <ul className="-my-[3px] flex w-[14px] flex-col justify-between pl-[2px] text-[4px] leading-[6px] text-[#999]">
            {ticks.map((t) => (
              <li key={t} className="flex items-center gap-px"><span className="w-[6px] text-right">{t}</span><span className="h-px flex-1 bg-[#252525]" /></li>
            ))}
          </ul>
          {[0, 1].map((i) => (
            <div key={i} className="flex w-[14px] items-end bg-[#2e2e2e] px-px"><div className="h-[2px] w-full bg-[#6aa584]" /></div>
          ))}
        </div>
      </div>
    </aside>
  );
}

function StatusBar() {
  const cell = "flex h-full items-center gap-[3px] border-r border-[#151515]";
  const notch = <Svg className="size-[3px] self-end mb-[3px] text-[#888]" box="0 0 4 4"><path d="M4 0v4H0z" /></Svg>;
  return (
    <footer className="mt-[2px] flex h-[17px] shrink-0 items-center bg-[#242424]">
      <button className={`${cell} w-[69px] gap-[2px] pl-[5px]`}><BrowserIcon />Content Drawer</button>
      <button className={`${cell} w-[54px] gap-px pl-[5px]`}><LogIcon />Output Log</button>
      <button className="flex items-center gap-[2px] pl-[7px]">
        <Svg><path d="M1 2h14v12H1zM3.500 5.500L6 8l-2.500 2.500M8 11h4" fill="none" stroke="currentColor" strokeWidth="1.600" /></Svg>Cmd <Down />
      </button>
      <div className="flex h-full items-center border-r border-[#151515] pr-[5px] pl-[5px]">
        <input type="text" aria-label="Console command" placeholder="Enter Console Command"
          className="h-[11px] w-[139px] rounded-[2px] border border-[#333] bg-[#0f0f0f] px-[3px] font-['Liberation_Mono',monospace] text-[6px] outline-none placeholder:text-[#666]" />
      </div>
      <div className="ml-auto flex h-full">
        <button className={`${cell} w-[72px] border-l pl-[7px]`}><DerivedIcon /><span className="flex-1 text-left">Derived Data</span>{notch}<span className="w-[3px]" /></button>
        <div className={`${cell} w-[32px] justify-center`}>
          <Svg className="size-[9px] text-[#999]"><path d="M1 12h3v3H1zM5 10h3v5H5zM9 7h3v8H9zM13 3h2.500v12H13zM1 2h3v1.500H1zM6 3h2v2H6z" /></Svg>
          <button aria-label="More"><EllipsisVertical className="size-[10px]" strokeWidth={3} /></button>
        </div>
        <button className="flex items-center gap-[2px] pr-[3px] pl-[5px]"><Ban className="size-[10px]" strokeWidth={2.5} /><span>Source Control Off</span>{notch}</button>
      </div>
    </footer>
  );
}

type Entry = { head: string } | { label: string; icon: React.ReactNode; keys?: string; sub?: boolean; off?: boolean; on?: boolean };

const entries: Entry[] = [
  { head: "SOUND BASE ACTIONS" },
  { label: "Play", icon: <PlayIcon />, off: true },
  { label: "Stop", icon: <StopIcon /> },
  { label: "Mute", icon: <MuteIcon /> },
  { label: "Solo", icon: <Headphones className="size-[8px] text-[#9fb0c8]" strokeWidth={3} /> },
  { head: "COMMON" },
  { label: "Edit...", icon: <PencilIcon /> },
  { label: "Rename", icon: <RenameIcon />, keys: "F2", off: true },
  { label: "Duplicate", icon: <StackIcon />, keys: "CTRL+D" },
  { label: "Save", icon: <SaveIcon className="size-[8px] text-[#a0a0a0]" />, keys: "CTRL+S" },
  { label: "Delete", icon: <Trash2 className="size-[8px] text-[#999]" strokeWidth={3} />, keys: "DELETE" },
  { label: "Asset Actions", icon: <Wrench className="size-[8px] text-[#999]" />, sub: true },
  { label: "Asset Localization", icon: <Flag className="size-[8px] fill-current text-[#888]" />, sub: true },
  { head: "AUDIO NORMALIZER" },
  { label: "Normalize Audio", icon: <SpeakerIcon />, on: true },
  { head: "EXPLORE" },
  { label: "Show in Folder View", icon: <BrowserIcon className="size-[8px] text-[#a0a0a0]" />, keys: "CTRL+B" },
  { label: "Show in Explorer", icon: <BrowserIcon className="size-[8px] text-[#777]" /> },
  { head: "REFERENCES" },
  { label: "Copy Reference", icon: <CopyRefIcon /> },
  { label: "Copy File Path", icon: <CopyRefIcon /> },
  { label: "Reference Viewer...", icon: <RefViewIcon />, keys: "ALT+SHIFT+R" },
  { label: "Size Map...", icon: <SizeMapIcon />, keys: "ALT+SHIFT+M" },
  { label: "Audit Assets...", icon: <AuditIcon className="size-[8px] text-[#888]" />, keys: "ALT+SHIFT+A" },
  { label: "Shader Cook Statistics...", icon: <CookIcon />, keys: "CTRL+ALT+SHIFT+S" },
  { label: "Connect To Source Control...", icon: <BranchIcon /> },
];

function ContextMenu() {
  return (
    <div role="menu" className="absolute top-[144px] left-[352px] grid h-[310px] w-[191px] auto-rows-fr border border-[#4a4a4a] bg-[#383838] pt-1 pb-[3px] shadow-lg">
      {entries.map((e) =>
        "head" in e ? (
          <div key={e.head} className="flex min-h-0 items-center gap-[6px] pr-[6px] pl-[6px] text-[5px] leading-[7px] tracking-widest text-[#808080]">
            {e.head}<span className="h-px flex-1 bg-[#585858]" />
          </div>
        ) : (
          <button key={e.label} role="menuitem" disabled={e.off}
            className={`flex min-h-0 items-center gap-1 pr-1 pl-[23px] text-left leading-[10px] ${e.on ? "bg-[#0070e0] text-white" : e.off ? "text-[#6c6c6c]" : "text-[#f4f4f4]"}`}>
            <span className={e.off || e.on ? "" : "text-[#c0c0c0]"}>{e.icon}</span>
            <span className="flex-1">{e.label}</span>
            {e.keys && <span className={`text-[6px] ${e.off ? "" : "text-[#b0b0b0]"}`}>{e.keys}</span>}
            {e.sub && <ChevronRight className="size-[8px]" strokeWidth={4} />}
          </button>
        )
      )}
    </div>
  );
}

export default function App() {
  return (
    <div className="relative flex h-screen min-h-[563px] flex-col overflow-hidden bg-[#151515] font-['Roboto',sans-serif] text-[7px] leading-[9px] whitespace-nowrap text-[#c8c8c8] [&_p]:whitespace-normal">
      <TitleBar />
      <Toolbar />
      <main className="mt-[2px] flex min-h-0 flex-1 gap-[2px] px-[2px]">
        <div className="flex min-w-0 flex-1 flex-col">
          <div className="flex min-h-0 flex-1 gap-[3px]">
            <PlaceActors />
            <Viewport />
          </div>
          <ContentBrowser />
        </div>
        <RightColumn />
      </main>
      <StatusBar />
      <ContextMenu />
      <div role="tooltip" className="absolute top-[323px] left-[546px] border border-[#999] bg-[#f4f4f4] px-[3px] py-[3px] font-['Inter',sans-serif] text-[6px] text-black">
        Adjusts the level of all selected sounds to have the same loudness level
      </div>
    </div>
  );
}
